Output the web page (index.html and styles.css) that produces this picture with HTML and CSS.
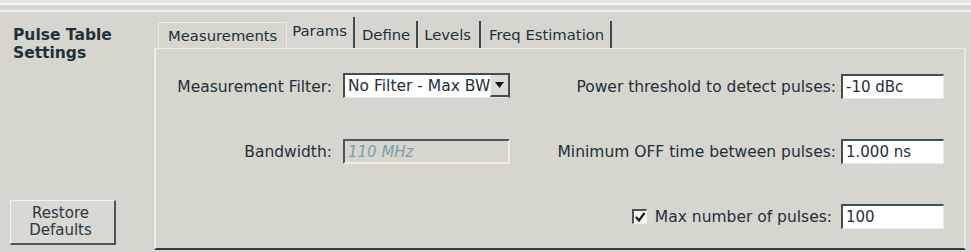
FILE: index.html
```html
<!DOCTYPE html>
<html>
<head>
<meta charset="utf-8">
<link rel="stylesheet" href="styles.css">
</head>
<body>
<div class="window">
  <div class="topbar"></div>
  <div class="main">
    <aside class="side">
      <h1 class="title">Pulse Table<br>Settings</h1>
      <button class="btn">Restore<br>Defaults</button>
    </aside>
    <section class="tabs-area">
      <nav class="tabs">
        <span class="tab tab-first">Measurements</span>
        <span class="tab tab-active">Params</span>
        <span class="tab tab-define">Define</span>
        <span class="tab tab-levels">Levels</span>
        <span class="tab tab-freq">Freq Estimation</span>
      </nav>
      <div class="panel">
        <label class="lbl lbl-left">Measurement Filter:</label>
        <div class="combo">
          <span class="combo-text">No Filter - Max BW</span>
          <span class="combo-btn"><svg width="9" height="6" viewBox="0 0 9 6"><polygon points="0,0 9,0 4.5,6" fill="#111"/></svg></span>
        </div>
        <label class="lbl">Power threshold to detect pulses:</label>
        <input class="field" type="text" value="-10 dBc" readonly>

        <label class="lbl lbl-left">Bandwidth:</label>
        <input class="field field-disabled" type="text" value="110 MHz" readonly>
        <label class="lbl">Minimum OFF time between pulses:</label>
        <input class="field" type="text" value="1.000 ns" readonly>

        <span></span>
        <span></span>
        <div class="check-row">
          <span class="checkbox"><svg width="12" height="12" viewBox="0 0 12 12"><polyline points="2,6 5,9.5 10.5,2" fill="none" stroke="#1a1a1a" stroke-width="2.2"/></svg></span>
          <label class="lbl">Max number of pulses:</label>
        </div>
        <input class="field" type="text" value="100" readonly>
      </div>
    </section>
  </div>
</div>
</body>
</html>
```

FILE: styles.css
```css
html, body {
  margin: 0;
  padding: 0;
  background: #d6d5ce;
}
.window {
  width: 971px;
  height: 252px;
  font-family: "DejaVu Sans", Verdana, sans-serif;
  font-size: 15.5px;
  color: #22303a;
  background: #d6d5ce;
  overflow: hidden;
}
.topbar {
  height: 14px;
  background: linear-gradient(to bottom,
    #ebe4e0 0px, #ebe4e0 3px,
    #f7f7f5 3px, #f7f7f5 5px,
    #d8d8d2 5px, #d8d8d2 10px,
    #eeeeea 10px, #eeeeea 12px,
    #d6d5ce 12px);
}
.main {
  display: flex;
  height: 238px;
}
.side {
  width: 154px;
  flex: none;
  display: flex;
  flex-direction: column;
  justify-content: space-between;
  padding: 0 0 7px 10px;
  box-sizing: border-box;
}
.title {
  margin: 12px 0 0 3px;
  font-size: 15.5px;
  font-weight: bold;
  line-height: 18px;
  color: #22303a;
}
.btn {
  width: 106px;
  height: 45px;
  padding: 0 4px 0 0;
  font-family: "DejaVu Sans", Verdana, sans-serif;
  font-size: 15px;
  line-height: 17px;
  color: #2a3840;
  background: #d9d8d2;
  border-style: solid;
  border-width: 1px 2px 2px 1px;
  border-color: #f6f4f0 #4c5656 #4c5656 #f6f4f0;
}
.tabs-area {
  flex: 1;
  display: flex;
  flex-direction: column;
  padding-right: 5px;
}
.tabs {
  height: 34px;
  display: flex;
  align-items: flex-end;
  padding-left: 4px;
  font-size: 14.8px;
}
.tab {
  height: 27px;
  line-height: 27px;
  padding: 0 6px 0 7px;
  border-right: 2px solid #3f4c4f;
  box-sizing: border-box;
}
.tab-first {
  height: 26px;
  line-height: 25px;
  padding: 0 9px 0 9px;
  border: 1px solid #eeebe6;
  border-bottom: none;
}
.tab-active {
  height: 31px;
  line-height: 28px;
  padding: 0 6px 0 5px;
  background: #d8d7d0;
}
.tab-define {
  padding: 0 6px 0 7px;
}
.tab-levels {
  padding: 0 8px 0 6px;
}
.tab-freq {
  padding: 0 6px 0 8px;
}
.panel {
  height: 202px;
  box-sizing: border-box;
  border-top: 1px solid #ece8e3;
  border-left: 2px solid #efece8;
  border-right: 2px solid #e9e6e1;
  border-bottom: 2px solid #34403f;
  display: grid;
  grid-template-columns: 182px 167px 1fr 103px;
  grid-template-rows: 25px 25px 25px;
  column-gap: 5px;
  row-gap: 40px;
  padding: 25px 20px 0 0;
  align-items: center;
}
.lbl {
  text-align: right;
  white-space: nowrap;
}
.lbl-left {
  padding-right: 6px;
}
.field {
  width: 103px;
  height: 25px;
  box-sizing: border-box;
  padding: 0 0 0 3px;
  font-family: "DejaVu Sans", Verdana, sans-serif;
  font-size: 15px;
  color: #22303a;
  background: #ffffff;
  border-style: solid;
  border-width: 2px 1px 1px 2px;
  border-color: #3f5050 #efe7e3 #efe7e3 #3f5050;
  outline: none;
}
.field-disabled {
  width: 167px;
  font-style: italic;
  color: #7f9eab;
  background: #d6d5ce;
  border-width: 2px 2px 2px 2px;
  border-color: #4a5a5a #f2ebe6 #f2ebe6 #4a5a5a;
}
.combo {
  height: 25px;
  box-sizing: border-box;
  display: flex;
  align-items: center;
  justify-content: space-between;
  background: #ffffff;
  border-style: solid;
  border-width: 2px 2px 1px 2px;
  border-color: #3f5050 #3f5050 #e9e4e0 #3f5050;
  position: relative;
  top: -1px;
}
.combo-text {
  padding-left: 3px;
  white-space: nowrap;
  overflow: hidden;
}
.combo-btn {
  flex: none;
  width: 18px;
  height: 22px;
  box-sizing: border-box;
  display: flex;
  align-items: center;
  justify-content: center;
  background: #dcdbd5;
  border-bottom: 2px solid #3f5050;
  border-left: 1px solid #f4f1ee;
}
.check-row {
  display: flex;
  justify-content: flex-end;
  align-items: center;
  gap: 8px;
  padding-right: 4px;
}
.checkbox {
  width: 15px;
  height: 15px;
  box-sizing: border-box;
  display: flex;
  align-items: center;
  justify-content: center;
  background: #f4f2ee;
  border-style: solid;
  border-width: 2px 1px 1px 2px;
  border-color: #4a5656 #f2eeea #f2eeea #4a5656;
}
```
